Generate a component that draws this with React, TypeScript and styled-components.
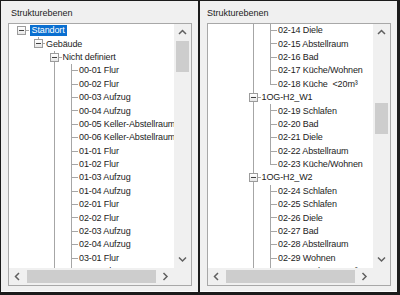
import styled, { createGlobalStyle } from 'styled-components';

type Link = 'pass' | 'tee' | 'elbow' | 'root' | 'none';

interface TreeRow {
  label: string;
  guides: Link[];
  box?: boolean;
  selected?: boolean;
}

const leaf = (label: string, last = false): TreeRow => ({
  label,
  guides: ['none', 'none', 'pass', last ? 'elbow' : 'tee'],
});

const storey = (label: string): TreeRow => ({
  label,
  guides: ['none', 'none', 'tee'],
  box: true,
});

const leftRows: TreeRow[] = [
  { label: 'Standort', guides: ['root'], box: true, selected: true },
  { label: 'Gebäude', guides: ['none', 'elbow'], box: true },
  storey('Nicht definiert'),
  leaf('00-01 Flur'),
  leaf('00-02 Flur'),
  leaf('00-03 Aufzug'),
  leaf('00-04 Aufzug'),
  leaf('00-05 Keller-Abstellraum'),
  leaf('00-06 Keller-Abstellraum'),
  leaf('01-01 Flur'),
  leaf('01-02 Flur'),
  leaf('01-03 Aufzug'),
  leaf('01-04 Aufzug'),
  leaf('02-01 Flur'),
  leaf('02-02 Flur'),
  leaf('02-03 Aufzug'),
  leaf('02-04 Aufzug'),
  leaf('03-01 Flur'),
  leaf('03-02 Flur'),
];

const rightRows: TreeRow[] = [
  leaf('02-14 Diele'),
  leaf('02-15 Abstellraum'),
  leaf('02-16 Bad'),
  leaf('02-17 Küche/Wohnen'),
  leaf('02-18 Küche  <20m³', true),
  storey('1OG-H2_W1'),
  leaf('02-19 Schlafen'),
  leaf('02-20 Bad'),
  leaf('02-21 Diele'),
  leaf('02-22 Abstellraum'),
  leaf('02-23 Küche/Wohnen', true),
  storey('1OG-H2_W2'),
  leaf('02-24 Schlafen'),
  leaf('02-25 Schlafen'),
  leaf('02-26 Diele'),
  leaf('02-27 Bad'),
  leaf('02-28 Abstellraum'),
  leaf('02-29 Wohnen'),
  leaf('02-30 Küche  <20m³'),
];

const GlobalStyle = createGlobalStyle`
  html, body {
    margin: 0;
    padding: 0;
    background: #1b1b1b;
  }
  * {
    box-sizing: border-box;
  }
`;

const Chevron = ({ dir }: { dir: 'up' | 'down' | 'left' | 'right' }) => {
  const points = {
    up: '1,5 4.5,1.5 8,5',
    down: '1,1.5 4.5,5 8,1.5',
    left: '5,1 1.5,4.5 5,8',
    right: '1.5,1 5,4.5 1.5,8',
  }[dir];
  const vertical = dir === 'up' || dir === 'down';
  return (
    <svg width={vertical ? 9 : 7} height={vertical ? 7 : 9} viewBox={vertical ? '0 0 9 7' : '0 0 7 9'}>
      <polyline points={points} fill="none" stroke="#606060" strokeWidth="1.5" />
    </svg>
  );
};

function TreePanel({ rows, titleInset, vThumbTop }: { rows: TreeRow[]; titleInset: number; vThumbTop: number }) {
  return (
    <Panel>
      <Title $inset={titleInset}>Strukturebenen</Title>
      <TreeBox>
        <TreeContent>
          {rows.map((row, i) => (
            <Row key={i}>
              {row.guides.map((g, j) => (
                <Guide key={j} $kind={g}>
                  {row.box && j === row.guides.length - 1 && <Expander />}
                </Guide>
              ))}
              <Label $selected={!!row.selected}>{row.label}</Label>
            </Row>
          ))}
        </TreeContent>
        <VScroll>
          <ArrowButton>
            <Chevron dir="up" />
          </ArrowButton>
          <VTrack>
            <VThumb $top={vThumbTop} />
          </VTrack>
          <ArrowButton>
            <Chevron dir="down" />
          </ArrowButton>
        </VScroll>
        <HScroll>
          <ArrowButton>
            <Chevron dir="left" />
          </ArrowButton>
          <HTrack>
            <HThumb />
          </HTrack>
          <ArrowButton>
            <Chevron dir="right" />
          </ArrowButton>
        </HScroll>
        <Corner />
      </TreeBox>
    </Panel>
  );
}

export default function App() {
  return (
    <>
      <GlobalStyle />
      <Frame>
        <TreePanel rows={leftRows} titleInset={3} vThumbTop={0} />
        <TreePanel rows={rightRows} titleInset={0} vThumbTop={62} />
      </Frame>
    </>
  );
}

const Frame = styled.div`
  display: flex;
  gap: 2px;
  width: 400px;
  height: 295px;
  padding: 1px 3px 3px 1px;
  background: #1b1b1b;
  font-family: 'Liberation Sans', Arial, sans-serif;
`;

const Panel = styled.div`
  flex: 0 0 197px;
  display: flex;
  flex-direction: column;
  gap: 3px;
  padding: 6px 6px 5px 7px;
  background: #f0f0f0;
  border-bottom: 1px solid #fcfcfc;
`;

const Title = styled.div<{ $inset: number }>`
  height: 13px;
  line-height: 13px;
  padding-left: ${p => p.$inset}px;
  font-size: 9px;
  color: #1c1c1c;
`;

const TreeBox = styled.div`
  height: 264px;
  display: grid;
  grid-template-columns: 1fr 17px;
  grid-template-rows: 1fr 17px;
  border: 1px solid #a8a8a8;
  background: #ffffff;
  overflow: hidden;
`;

const TreeContent = styled.div`
  overflow: hidden;
  padding-left: 4px;
`;

const Row = styled.div`
  display: flex;
  align-items: center;
  height: 13.4px;
`;

const Guide = styled.span<{ $kind: Link }>`
  position: relative;
  flex: 0 0 16.5px;
  align-self: stretch;

  &::before {
    content: '';
    position: absolute;
    left: 8px;
    width: 1px;
    top: 0;
    bottom: ${p => (p.$kind === 'elbow' ? '6px' : '0')};
    background: #a6a6a6;
    display: ${p => (p.$kind === 'pass' || p.$kind === 'tee' || p.$kind === 'elbow' ? 'block' : 'none')};
  }

  &::after {
    content: '';
    position: absolute;
    left: 8px;
    right: 1px;
    top: 6px;
    height: 1px;
    background: #a6a6a6;
    display: ${p => (p.$kind === 'tee' || p.$kind === 'elbow' || p.$kind === 'root' ? 'block' : 'none')};
  }
`;

const Expander = styled.span`
  position: absolute;
  z-index: 1;
  left: 4px;
  top: 2px;
  width: 9px;
  height: 9px;
  border: 1px solid #9c9c9c;
  background: linear-gradient(#ffffff, #e6e6e6);

  &::after {
    content: '';
    position: absolute;
    left: 1px;
    top: 3px;
    width: 5px;
    height: 1px;
    background: #404040;
  }
`;

const Label = styled.span<{ $selected: boolean }>`
  height: 11px;
  line-height: 11px;
  padding: ${p => (p.$selected ? '0 2px' : '0 1px 0 0')};
  font-size: 9px;
  letter-spacing: -0.12px;
  white-space: pre;
  color: ${p => (p.$selected ? '#ffffff' : '#1c1c1c')};
  background: ${p => (p.$selected ? '#0a6fd0' : 'transparent')};
`;

const VScroll = styled.div`
  display: flex;
  flex-direction: column;
  background: #f0f0f0;
`;

const HScroll = styled.div`
  display: flex;
  background: #f0f0f0;
`;

const ArrowButton = styled.div`
  flex: 0 0 17px;
  display: flex;
  align-items: center;
  justify-content: center;
`;

const VTrack = styled.div`
  flex: 1;
  display: flex;
  flex-direction: column;
  align-items: center;
`;

const VThumb = styled.div<{ $top: number }>`
  width: 13px;
  height: 31px;
  margin-top: ${p => p.$top}px;
  background: #cdcdcd;
`;

const HTrack = styled.div`
  flex: 1;
  display: flex;
  align-items: center;
  padding: 0 1px;
`;

const HThumb = styled.div`
  flex: 1;
  height: 13px;
  background: #cdcdcd;
`;

const Corner = styled.div`
  background: #f0f0f0;
`;
